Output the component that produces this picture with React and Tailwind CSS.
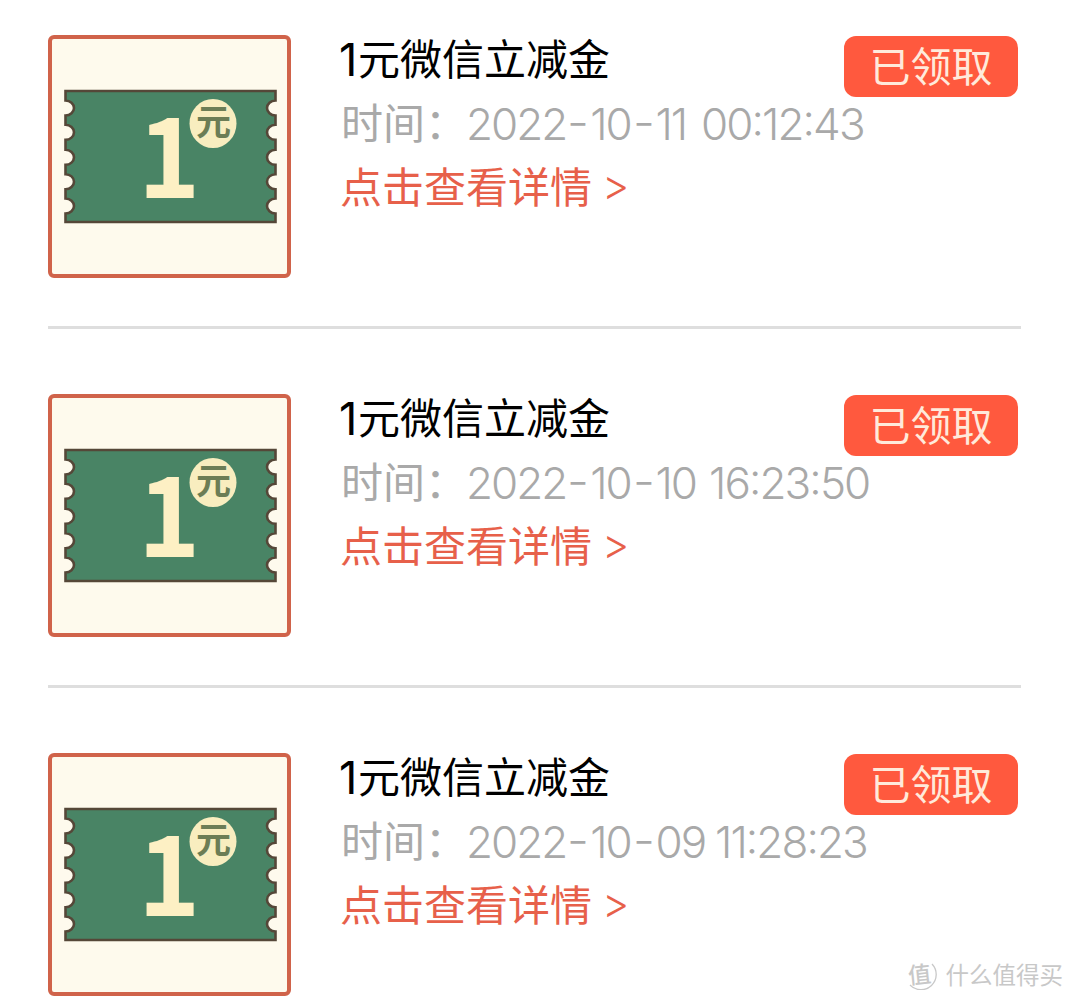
const records = [
    { id: 1, date: '2022-10-11', time: '00:12:43', dateWidth: 'w-[235px]' },
    { id: 2, date: '2022-10-10', time: '16:23:50', dateWidth: 'w-[243px]' },
    { id: 3, date: '2022-10-09', time: '11:28:23', dateWidth: 'w-[249px]' },
];

function Coupon() {
    return (
        <div className="h-[243px] w-[243px] shrink-0 overflow-hidden rounded-[6px] border-4 border-[#d0634a] bg-[#fefaed]">
            <svg viewBox="4 4 235 235" className="block h-full w-full">
                <path
                    d="M17.5 56H227.5V65.5A8.5 7.5 0 0 0 227.5 80.5V89.8A8.5 7.5 0 0 0 227.5 104.8V114.8A8.5 7.5 0 0 0 227.5 129.8V139.2A8.5 7.5 0 0 0 227.5 154.2V163.5A8.5 7.5 0 0 0 227.5 178.5V187H17.5V178.5A8.5 7.5 0 0 0 17.5 163.5V154.2A8.5 7.5 0 0 0 17.5 139.2V129.8A8.5 7.5 0 0 0 17.5 114.8V104.8A8.5 7.5 0 0 0 17.5 89.8V80.5A8.5 7.5 0 0 0 17.5 65.5Z"
                    fill="#498465"
                    stroke="#554738"
                    strokeWidth="2.6"
                />
                <text
                    transform="translate(90 163) scale(0.95 1)"
                    fontSize="111"
                    className="fill-[#fdf0c4] font-['Noto_Sans_CJK_SC',sans-serif] font-bold"
                >
                    1
                </text>
                <ellipse cx="165" cy="88.5" rx="23.5" ry="24.5" fill="#f8edbf" />
                <text
                    x="165.5"
                    y="100"
                    fontSize="35"
                    textAnchor="middle"
                    className="fill-[#6c7d55] font-['Noto_Sans_CJK_SC',sans-serif] font-bold"
                >
                    元
                </text>
            </svg>
        </div>
    );
}

function DateText({ value }) {
    const [year, month, day] = value.split('-');
    return (
        <>
            {year}
            <span className="ml-[2px] mr-[4px] inline-block scale-x-110">-</span>
            {month}
            <span className="ml-[3px] mr-[4px] inline-block scale-x-110">-</span>
            {day}
        </>
    );
}

function RecordRow({ record }) {
    return (
        <article className="mb-[65px] flex h-[294px] items-start border-b-[3px] border-[#dedede]">
            <Coupon />
            <div className="ml-[50px] flex-1 whitespace-nowrap text-[42px] leading-[64px]">
                <h3 className="-mt-[10px] flex h-[64px] text-black">
                    <span className="-ml-[2px] w-[19px] pt-[3px] font-['Inter',sans-serif] text-[45px] tracking-[-2px]">
                        1
                    </span>
                    <span>元微信立减金</span>
                </h3>
                <p className="flex h-[64px] text-[#a9a9a9]">
                    <span className="w-[125px]">时间：</span>
                    <span
                        className={`${record.dateWidth} pt-[3px] font-['Inter',sans-serif] text-[44px] font-light tracking-[-2px] [font-feature-settings:'case'] [font-kerning:none]`}
                    >
                        <DateText value={record.date} />
                    </span>
                    <span className="pt-[3px] font-['Inter',sans-serif] text-[44px] font-light tracking-[-1.9px] [font-feature-settings:'case']">
                        {record.time}
                    </span>
                </p>
                <p className="flex h-[64px] text-[#e7604a]">
                    <span className="-ml-px w-[262px]">点击查看详情</span>
                    <span className="font-['Inter',sans-serif] font-light">&gt;</span>
                </p>
            </div>
            <span className="mr-[3px] mt-px flex h-[61px] w-[174px] -ml-[174px] items-center justify-center rounded-[12px] bg-[#ff593e] pb-[5px] text-[41px] leading-none text-[#ffeadb]">
                已领取
            </span>
        </article>
    );
}

export default function App() {
    return (
        <main className="relative h-[1000px] w-[1074px] overflow-hidden bg-white pl-12 pr-[53px] pt-[35px] font-['Noto_Sans_CJK_SC',sans-serif]">
            {records.map((record) => (
                <RecordRow key={record.id} record={record} />
            ))}
            <div className="absolute bottom-[9px] right-[11px] flex items-center gap-[9px] text-[#c8c8c8]">
                <span className="relative flex h-[30px] w-[30px] items-center justify-center text-[23px] leading-none">
                    <svg viewBox="0 0 30 30" className="absolute inset-0" fill="none" stroke="currentColor">
                        <path d="M25 4A14 14 0 0 1 3 25" strokeWidth="1.3" />
                    </svg>
                    <span className="-ml-[4px] -mt-[3px] -rotate-6 font-medium">值</span>
                </span>
                <span className="-mt-[2px] text-[23.5px] leading-[34px]">什么值得买</span>
            </div>
        </main>
    );
}
